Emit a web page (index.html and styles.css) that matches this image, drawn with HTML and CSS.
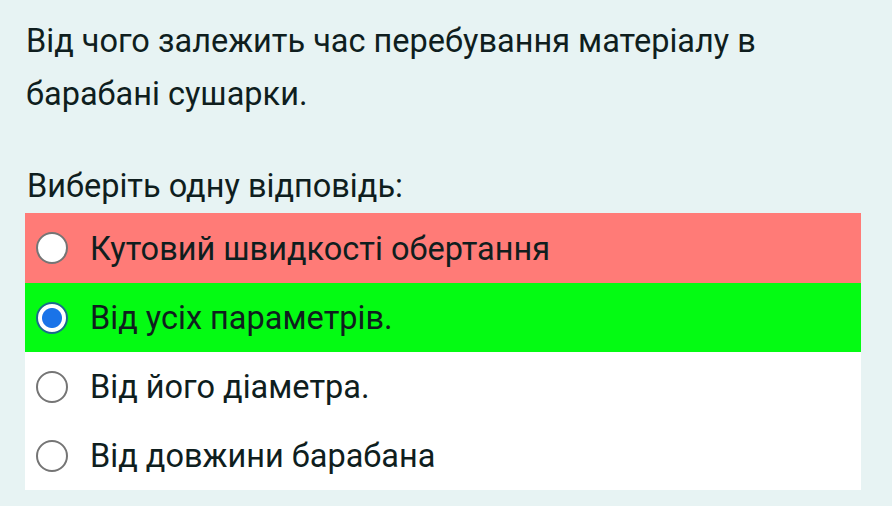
FILE: index.html
```html
<!DOCTYPE html>
<html lang="uk">
<head>
<meta charset="utf-8">
<link rel="stylesheet" href="styles.css">
</head>
<body>
<div class="page">
  <p class="question">Від чого залежить час перебування матеріалу в барабані сушарки.</p>
  <p class="prompt">Виберіть одну відповідь:</p>
  <div class="answers">
    <div class="option wrong"><span class="radio"></span><span class="label">Кутовий швидкості обертання</span></div>
    <div class="option right"><span class="radio checked"></span><span class="label">Від усіх параметрів.</span></div>
    <div class="option"><span class="radio"></span><span class="label">Від його діаметра.</span></div>
    <div class="option"><span class="radio"></span><span class="label">Від довжини барабана</span></div>
  </div>
</div>
</body>
</html>
```
FILE: styles.css
```css
html, body {
  margin: 0;
  padding: 0;
  background: #e7f3f3;
}
body {
  font-family: Roboto, "Noto Sans", sans-serif;
  color: #0f1e1e;
}
.page {
  width: 836px;
  padding: 15px 0 0 26px;
}
.question {
  margin: 0;
  font-size: 32.5px;
  line-height: 53px;
  width: 820px;
}
.prompt {
  margin: 39px 0 0 0;
  font-size: 32.5px;
  line-height: 53px;
  padding-left: 1px;
}
.answers {
  margin-top: 0;
  margin-left: -1px;
  background: #ffffff;
  width: 836px;
}
.option {
  display: flex;
  align-items: center;
  height: 69px;
  font-size: 32.5px;
}
.option.wrong { background: #ff7b77; height: 70px; }
.option.right { background: #04fb13; }
.radio {
  box-sizing: border-box;
  width: 32px;
  height: 32px;
  border-radius: 50%;
  border: 2px solid #757575;
  background: #fff;
  margin-left: 11px;
  margin-right: 22px;
  flex: none;
}
.radio.checked {
  border: 2px solid #1a6a8c;
  background: radial-gradient(circle, #1a73e8 0 9.5px, #ffffff 10.5px);
}
.label {
  line-height: 40px;
  padding-top: 1px;
}
```
